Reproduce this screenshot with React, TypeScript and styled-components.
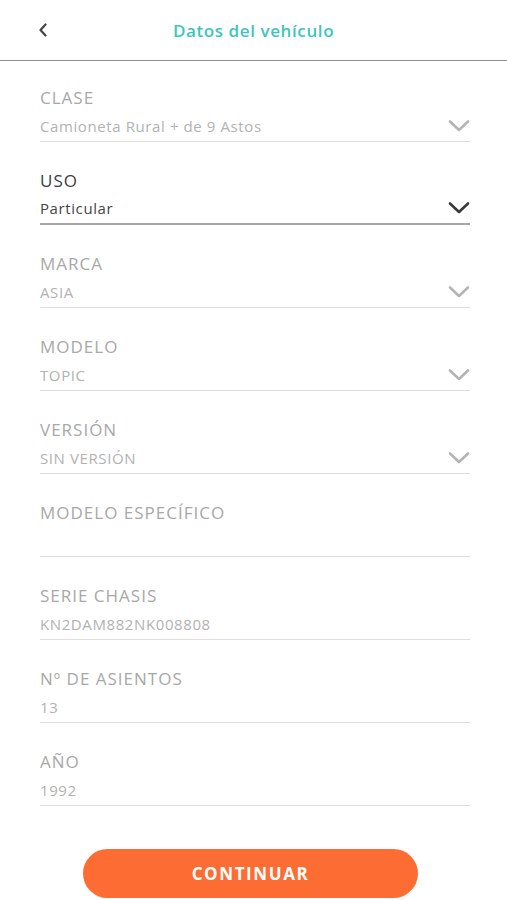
import React from 'react';
import styled, { createGlobalStyle } from 'styled-components';

interface IField {
    label: string;
    value: string;
    select?: boolean;
    active?: boolean;
}

const fields: IField[] = [
    { label: 'CLASE', value: 'Camioneta Rural + de 9 Astos', select: true },
    { label: 'USO', value: 'Particular', select: true, active: true },
    { label: 'MARCA', value: 'ASIA', select: true },
    { label: 'MODELO', value: 'TOPIC', select: true },
    { label: 'VERSIÓN', value: 'SIN VERSIÓN', select: true },
    { label: 'MODELO ESPECÍFICO', value: '' },
    { label: 'SERIE CHASIS', value: 'KN2DAM882NK008808' },
    { label: 'Nº DE ASIENTOS', value: '13' },
    { label: 'AÑO', value: '1992' },
];

const GlobalStyle = createGlobalStyle`
    body {
        margin: 0;
        background: #ffffff;
        font-family: "Open Sans", "Noto Sans", sans-serif;
    }
`;

const Chevron = ({ color }: { color: string }) => (
    <svg width="22" height="14" viewBox="0 0 22 14">
        <path
            d="M2 2.5 L11 11 L20 2.5"
            fill="none"
            stroke={color}
            strokeWidth="2.6"
            strokeLinecap="round"
            strokeLinejoin="round"
        />
    </svg>
);

const App = () => {
    return (
        <StyledPage>
            <GlobalStyle />
            <StyledHeader>
                <StyledBack>
                    <svg width="10" height="14" viewBox="0 0 10 14">
                        <path
                            d="M7.5 1.5 L2.5 7 L7.5 12.5"
                            fill="none"
                            stroke="#444"
                            strokeWidth="2.2"
                            strokeLinecap="round"
                            strokeLinejoin="round"
                        />
                    </svg>
                </StyledBack>
                <StyledTitle>Datos del vehículo</StyledTitle>
                <div />
            </StyledHeader>
            <StyledForm>
                {fields.map((f) => (
                    <StyledField key={f.label}>
                        <StyledLabel active={f.active}>{f.label}</StyledLabel>
                        <StyledInputRow active={f.active}>
                            <StyledValue active={f.active}>{f.value}</StyledValue>
                            {f.select && <Chevron color={f.active ? '#3a3a3a' : '#b4b4b4'} />}
                        </StyledInputRow>
                    </StyledField>
                ))}
            </StyledForm>
            <StyledFooter>
                <StyledButton>CONTINUAR</StyledButton>
            </StyledFooter>
        </StyledPage>
    );
};

const StyledPage = styled.div`
    width: 507px;
    height: 900px;
    display: flex;
    flex-direction: column;
    overflow: hidden;
    & > * {
        flex-shrink: 0;
    }
`;

const StyledHeader = styled.div`
    height: 60px;
    display: grid;
    grid-template-columns: 80px 1fr 80px;
    align-items: center;
    border-bottom: 1.5px solid #8e8e8e;
`;

const StyledBack = styled.div`
    display: flex;
    padding-left: 38px;
`;

const StyledTitle = styled.h1`
    margin: 0;
    text-align: center;
    font-size: 17px;
    font-weight: 600;
    color: #3ec5bd;
    letter-spacing: 0.6px;
`;

const StyledForm = styled.div`
    display: flex;
    flex-direction: column;
    padding: 25px 37px 0 40px;
`;

const StyledField = styled.div`
    display: flex;
    flex-direction: column;
    height: 83px;
`;

const StyledLabel = styled.div<{ active?: boolean }>`
    font-size: 17px;
    line-height: 24px;
    color: ${(p) => (p.active ? '#3d3d3d' : '#a8a8a8')};
    letter-spacing: 1px;
`;

const StyledInputRow = styled.div<{ active?: boolean }>`
    display: flex;
    align-items: center;
    justify-content: space-between;
    height: 32px;
    border-bottom: ${(p) => (p.active ? '2px solid #a6a6a6' : '1.5px solid #dddddd')};
    box-sizing: border-box;
`;

const StyledValue = styled.div<{ active?: boolean }>`
    font-size: 15px;
    color: ${(p) => (p.active ? '#454545' : '#b2b2b2')};
    letter-spacing: 0.6px;
`;

const StyledFooter = styled.div`
    display: flex;
    padding: 16px 0 0 83px;
`;

const StyledButton = styled.button`
    width: 335px;
    height: 49px;
    border: none;
    border-radius: 25px;
    background: #fd6c33;
    color: #ffffff;
    font-family: "Open Sans", "Noto Sans", sans-serif;
    font-size: 17px;
    font-weight: 700;
    letter-spacing: 1.6px;
`;

export default App;
